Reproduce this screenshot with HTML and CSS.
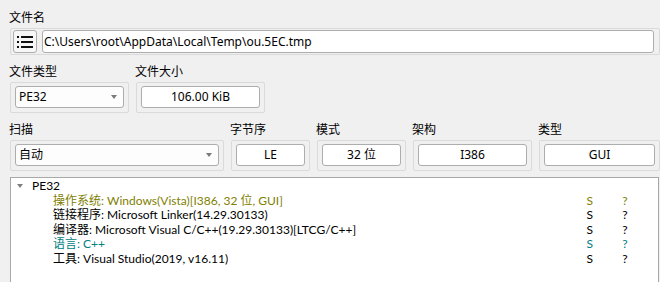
FILE: index.html
```html
<!DOCTYPE html>
<html lang="zh">

<head>
    <meta charset="UTF-8">
    <title>文件信息</title>
    <link rel="stylesheet" href="styles.css">
</head>

<body>
    <div class="window">
        <!-- File name -->
        <div class="field-label top">文件名</div>
        <div class="group path-group">
            <div class="tool-btn">
                <svg width="18" height="14" viewBox="0 0 18 14">
                    <rect x="1" y="1" width="2" height="2" fill="#111" />
                    <rect x="1" y="6" width="2" height="2" fill="#111" />
                    <rect x="1" y="11" width="2" height="2" fill="#111" />
                    <rect x="5" y="1" width="12" height="2" fill="#111" />
                    <rect x="5" y="6" width="12" height="2" fill="#111" />
                    <rect x="5" y="11" width="12" height="2" fill="#111" />
                </svg>
            </div>
            <div class="line-edit path">C:\Users\root\AppData\Local\Temp\ou.5EC.tmp</div>
        </div>

        <!-- File type / size -->
        <div class="row">
            <div class="col w-type">
                <div class="field-label">文件类型</div>
                <div class="group">
                    <div class="combo">PE32<span class="arrow"></span></div>
                </div>
            </div>
            <div class="col w-size">
                <div class="field-label">文件大小</div>
                <div class="group">
                    <div class="line-edit">106.00 KiB</div>
                </div>
            </div>
        </div>

        <!-- Scan options -->
        <div class="row">
            <div class="col w-scan">
                <div class="field-label">扫描</div>
                <div class="group">
                    <div class="combo">自动<span class="arrow"></span></div>
                </div>
            </div>
            <div class="col w-endian">
                <div class="field-label">字节序</div>
                <div class="group">
                    <div class="line-edit">LE</div>
                </div>
            </div>
            <div class="col w-mode">
                <div class="field-label">模式</div>
                <div class="group">
                    <div class="line-edit">32 位</div>
                </div>
            </div>
            <div class="col w-arch">
                <div class="field-label">架构</div>
                <div class="group">
                    <div class="line-edit">I386</div>
                </div>
            </div>
            <div class="col w-kind">
                <div class="field-label">类型</div>
                <div class="group">
                    <div class="line-edit">GUI</div>
                </div>
            </div>
        </div>

        <!-- Result tree -->
        <div class="tree">
            <div class="tree-row root"><span class="branch"></span>PE32</div>
            <div class="tree-row child olive">
                <span class="name">操作系统: Windows(Vista)[I386, 32 位, GUI]</span>
                <span class="flag">S</span><span class="flag">?</span>
            </div>
            <div class="tree-row child">
                <span class="name">链接程序: Microsoft Linker(14.29.30133)</span>
                <span class="flag">S</span><span class="flag">?</span>
            </div>
            <div class="tree-row child">
                <span class="name">编译器: Microsoft Visual C/C++(19.29.30133)[LTCG/C++]</span>
                <span class="flag">S</span><span class="flag">?</span>
            </div>
            <div class="tree-row child teal">
                <span class="name">语言: C++</span>
                <span class="flag">S</span><span class="flag">?</span>
            </div>
            <div class="tree-row child">
                <span class="name">工具: Visual Studio(2019, v16.11)</span>
                <span class="flag">S</span><span class="flag">?</span>
            </div>
        </div>
    </div>
</body>

</html>
```

FILE: styles.css
```css
html,
body {
    margin: 0;
    height: 100%;
    overflow: hidden;
}

body {
    background-color: #f0f0f0;
    font-family: "Noto Sans", "Noto Sans CJK SC", sans-serif;
    font-size: 12px;
    color: #000;
}

.window {
    padding-left: 10px;
}

.field-label {
    height: 18px;
    line-height: 18px;
    margin: 8px 0 1px -1px;
    white-space: nowrap;
}

.field-label.top {
    margin-top: 9px;
}

.group {
    box-sizing: border-box;
    border: 1px solid #dadada;
    border-radius: 2px;
    padding: 3px 4px 4px 4px;
}

.path-group {
    width: 650px;
    display: flex;
    gap: 5px;
    padding: 1px 5px 1px 2px;
}

.tool-btn {
    box-sizing: border-box;
    width: 24px;
    height: 23px;
    border: 1px solid #adadad;
    border-radius: 3px;
    background-color: #f7f7f7;
    display: flex;
    align-items: center;
    justify-content: center;
}

.line-edit {
    box-sizing: border-box;
    height: 22px;
    line-height: 20px;
    border: 1px solid #adadad;
    border-radius: 3px;
    background-color: #fff;
    text-align: center;
    white-space: nowrap;
}

.line-edit.path {
    flex: 1;
    height: 23px;
    line-height: 21px;
    text-align: left;
    padding-left: 1px;
}

.combo {
    box-sizing: border-box;
    height: 22px;
    line-height: 20px;
    border: 1px solid #adadad;
    border-radius: 3px;
    background-color: #fdfdfd;
    padding-left: 3px;
    position: relative;
}

.arrow {
    position: absolute;
    right: 6px;
    top: 8px;
    border-left: 3.5px solid transparent;
    border-right: 3.5px solid transparent;
    border-top: 4px solid #7a7a7a;
}

.row {
    display: flex;
    gap: 7px;
}

.col {
    display: flex;
    flex-direction: column;
}

.w-type { width: 119px; }
.w-size { width: 129px; }
.w-scan { width: 214px; }
.w-endian { width: 79px; }
.w-mode { width: 89px; }
.w-arch { width: 119px; }
.w-kind { width: 121px; }

.tree {
    box-sizing: border-box;
    width: 649px;
    height: 106px;
    margin-top: 6px;
    border: 1px solid #a8a8a8;
    border-bottom: none;
    background-color: #fff;
    padding-top: 1px;
    font-family: "Lato", "Noto Sans CJK SC", sans-serif;
    font-size: 12px;
}

.tree-row {
    height: 14.5px;
    line-height: 14.5px;
    display: flex;
    align-items: center;
    white-space: nowrap;
}

.tree-row.root {
    padding-left: 6px;
}

.branch {
    width: 0;
    height: 0;
    border-left: 3.5px solid transparent;
    border-right: 3.5px solid transparent;
    border-top: 4px solid #808080;
    margin-right: 9px;
}

.tree-row.child {
    padding-left: 42px;
}

.name {
    width: 537px;
}

.flag {
    width: 36px;
}

.olive {
    color: #808000;
}

.teal {
    color: #008080;
}
```
